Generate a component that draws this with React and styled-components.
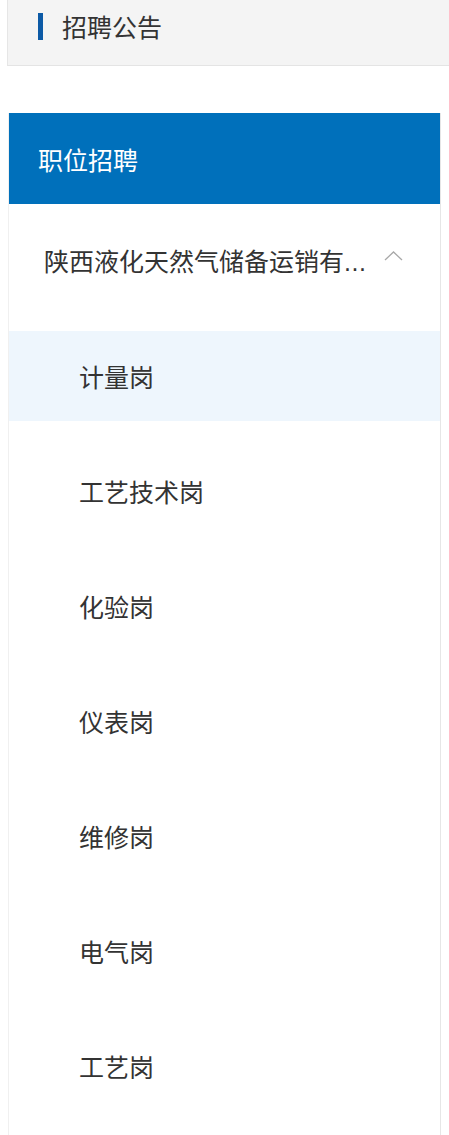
import React from 'react';
import styled, { createGlobalStyle } from 'styled-components';

const GlobalStyle = createGlobalStyle`
  html, body {
    margin: 0;
    padding: 0;
    background: #ffffff;
  }

  body {
    font-family: "Noto Sans CJK SC", "Noto Sans", sans-serif;
    color: #333333;
  }
`;

const Page = styled.div`
  width: 449px;
  overflow: hidden;
`;

const TitleBar = styled.div`
  margin-left: 7px;
  height: 65px;
  padding-left: 30px;

  display: flex;
  align-items: center;
  gap: 19px;

  background: #f4f4f4;
  border-left: 1px solid #e6e6e6;
  border-bottom: 1px solid #e4e4e4;

  & .accent {
    width: 5px;
    height: 27px;
    margin-top: -13px;
    background: #0c5aa6;
  }

  & .text {
    font-size: 25px;
    line-height: 1;
    margin-top: -13px;
    color: #333333;
  }
`;

const Sidebar = styled.div`
  margin: 47px 0 0 8px;
  width: 433px;
  min-height: 1022px;

  background: #ffffff;
  border-right: 1px solid #e6e6e6;
  border-left: 1px solid #f0f0f0;
  box-sizing: border-box;
`;

const SidebarHead = styled.div`
  height: 91px;
  padding-left: 29px;

  display: flex;
  align-items: center;

  background: #0070bb;
  color: #ffffff;
  font-size: 25px;
`;

const GroupTitle = styled.div`
  height: 112px;
  padding: 0 37px 0 35px;

  display: flex;
  align-items: center;
  justify-content: space-between;

  & .name {
    font-size: 25px;
    white-space: nowrap;
    color: #333333;
  }

  & .dots {
    font-family: "Liberation Sans", sans-serif;
    letter-spacing: 0.5px;
  }

  & svg {
    flex: none;
    margin-top: -8px;
  }
`;

const ItemList = styled.div`
  padding-top: 15px;

  display: flex;
  flex-direction: column;
  gap: 25px;
`;

const Item = styled.div`
  height: 90px;
  padding-left: 70px;

  display: flex;
  align-items: center;

  font-size: 25px;
  color: #333333;
  background: ${(p) => (p.$active ? '#eef6fd' : 'transparent')};
`;

const items = ['计量岗', '工艺技术岗', '化验岗', '仪表岗', '维修岗', '电气岗', '工艺岗'];

const App = () => {
  return (
    <Page>
      <GlobalStyle />
      <TitleBar>
        <div className="accent" />
        <div className="text">招聘公告</div>
      </TitleBar>

      <Sidebar>
        <SidebarHead>职位招聘</SidebarHead>

        <GroupTitle>
          <div className="name">
            陕西液化天然气储备运销有<span className="dots">...</span>
          </div>
          <svg width="19" height="10" viewBox="0 0 19 10" fill="none">
            <path d="M1 9 L9.5 1 L18 9" stroke="#a8a8a8" strokeWidth="1.3" />
          </svg>
        </GroupTitle>

        <ItemList>
          {items.map((name, i) => (
            <Item key={name} $active={i === 0}>
              {name}
            </Item>
          ))}
        </ItemList>
      </Sidebar>
    </Page>
  );
};

export default App;
